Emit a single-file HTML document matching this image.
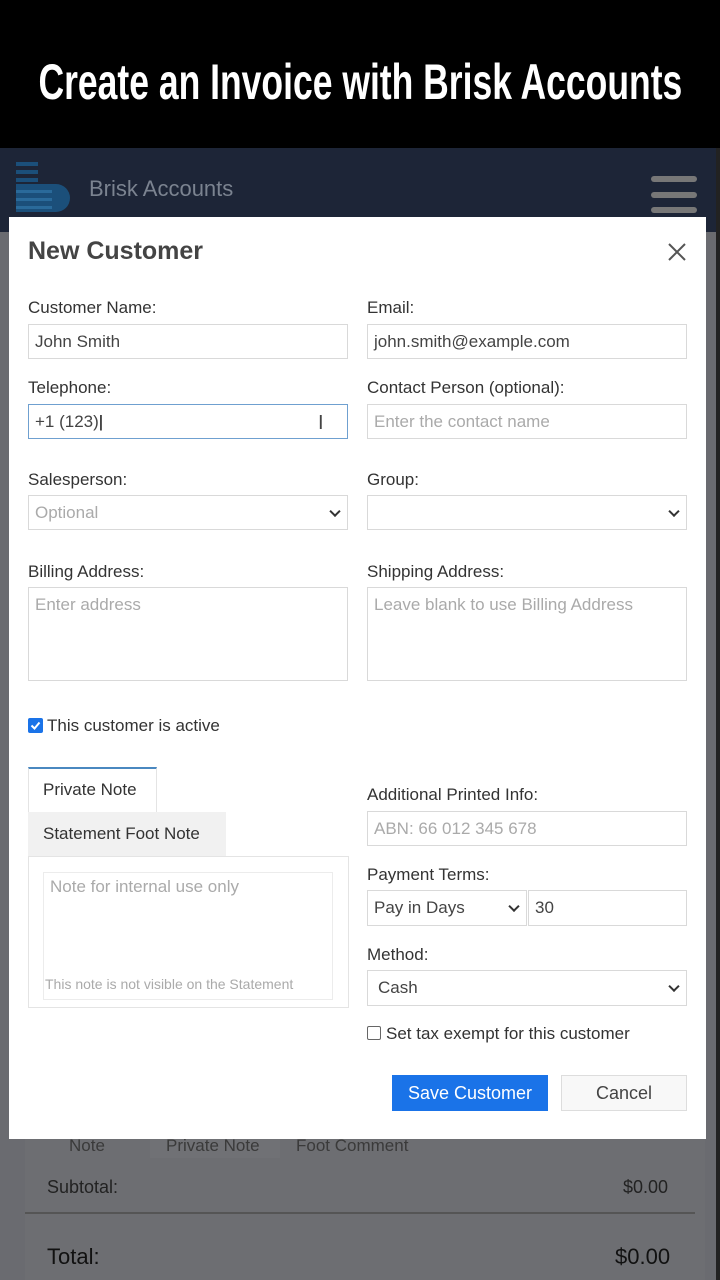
<!DOCTYPE html>
<html><head><meta charset="utf-8"><style>
*{box-sizing:border-box;margin:0;padding:0}
body{width:720px;height:1280px;position:relative;overflow:hidden;background:#000;font-family:"Liberation Sans",sans-serif;color:#333}
.a{position:absolute}
.t{font-size:17px;color:#333;white-space:nowrap}
.in{position:absolute;border:1px solid #d9d9d9;background:#fff;font-size:17px;padding:0 6px;display:flex;align-items:center;color:#444;white-space:nowrap}
.ph{color:#aaa}
.chev{position:absolute;right:8px;top:50%;width:8px;height:8px;border-right:2px solid #333;border-bottom:2px solid #333;transform:translateY(-70%) rotate(45deg)}
</style></head><body>
<div class="a" style="left:0;top:0;width:720px;height:148px;background:#000"></div>
<div class="a" style="left:0;top:52px;width:720px;height:60px;display:flex;justify-content:center;align-items:center"><span style="display:inline-block;white-space:nowrap;color:#fff;font-weight:bold;font-size:50px;transform:scaleX(0.71)">Create an Invoice with Brisk Accounts</span></div>
<div class="a" style="left:0;top:148px;width:716px;height:1132px;background:#6a6b70"></div>
<div class="a" style="left:0;top:148px;width:716px;height:84px;background:#1d2537"></div>
<div class="a" style="left:716px;top:148px;width:4px;height:1132px;background:#222"></div>
<svg class="a" style="left:14px;top:160px" width="60" height="56" viewBox="0 0 60 56"><g fill="#1b4f7a"><rect x="2" y="2" width="22" height="4"/><rect x="2" y="10" width="22" height="4"/><rect x="2" y="18" width="22" height="4"/><path d="M2 24h40a14 14 0 0 1 0 28H2z"/></g><g fill="#2a6a9a"><rect x="2" y="30" width="36" height="3"/><rect x="2" y="38" width="36" height="3"/><rect x="2" y="46" width="36" height="3"/></g></svg>
<div class="a" style="left:89px;top:176px;font-size:22px;color:#7b8390">Brisk Accounts</div>
<div class="a" style="left:651px;top:176px;width:46px;height:6px;background:#777;border-radius:3px"></div>
<div class="a" style="left:651px;top:192px;width:46px;height:6px;background:#777;border-radius:3px"></div>
<div class="a" style="left:651px;top:207px;width:46px;height:6px;background:#777;border-radius:3px"></div>
<div class="a" style="left:25px;top:1139px;width:680px;height:141px;background:#6d6e72"></div>
<div class="a" style="left:69px;top:1136px;font-size:17px;color:#3a3a3a">Note</div>
<div class="a" style="left:150px;top:1136px;width:130px;height:22px;background:#707175"></div>
<div class="a" style="left:166px;top:1136px;font-size:17px;color:#3a3a3a">Private Note</div>
<div class="a" style="left:296px;top:1136px;font-size:17px;color:#3a3a3a">Foot Comment</div>
<div class="a" style="left:47px;top:1177px;font-size:18px;color:#222">Subtotal:</div>
<div class="a" style="left:623px;top:1177px;font-size:18px;color:#222">$0.00</div>
<div class="a" style="left:25px;top:1212px;width:670px;height:2px;background:#555"></div>
<div class="a" style="left:47px;top:1244px;font-size:22px;color:#111">Total:</div>
<div class="a" style="left:615px;top:1244px;font-size:22px;color:#111">$0.00</div>
<div class="a" style="left:9px;top:217px;width:697px;height:922px;background:#fff"></div>
<div class="a" style="left:28px;top:237px;font-size:25px;font-weight:bold;color:#444">New Customer</div>
<svg class="a" style="left:668px;top:243px" width="18" height="18" viewBox="0 0 18 18"><path d="M1 1L17 17M17 1L1 17" stroke="#555" stroke-width="2"/></svg>

<div class="a t" style="left:28px;top:298px">Customer Name:</div>
<div class="in" style="left:28px;top:324px;width:320px;height:35px">John Smith</div>
<div class="a t" style="left:367px;top:298px">Email:</div>
<div class="in" style="left:367px;top:324px;width:320px;height:35px">john.smith@example.com</div>

<div class="a t" style="left:28px;top:378px">Telephone:</div>
<div class="in" style="left:28px;top:404px;width:320px;height:35px;border-color:#6fa0d0">+1 (123)<span style="color:#000">|</span></div>
<div class="a" style="left:318px;top:412px;font-size:20px;color:#444">I</div>
<div class="a t" style="left:367px;top:378px">Contact Person (optional):</div>
<div class="in ph" style="left:367px;top:404px;width:320px;height:35px">Enter the contact name</div>

<div class="a t" style="left:28px;top:470px">Salesperson:</div>
<div class="in ph" style="left:28px;top:495px;width:320px;height:35px">Optional<span class="chev"></span></div>
<div class="a t" style="left:367px;top:470px">Group:</div>
<div class="in" style="left:367px;top:495px;width:320px;height:35px"><span class="chev"></span></div>

<div class="a t" style="left:28px;top:562px">Billing Address:</div>
<div class="in ph" style="left:28px;top:587px;width:320px;height:94px;align-items:flex-start;padding-top:7px">Enter address</div>
<div class="a t" style="left:367px;top:562px">Shipping Address:</div>
<div class="in ph" style="left:367px;top:587px;width:320px;height:94px;align-items:flex-start;padding-top:7px">Leave blank to use Billing Address</div>

<div class="a" style="left:28px;top:718px;width:15px;height:15px;background:#1a73e8;border-radius:2px"></div>
<svg class="a" style="left:28px;top:718px" width="15" height="15" viewBox="0 0 15 15"><path d="M3.5 7.5l3 3 5-6" stroke="#fff" stroke-width="2" fill="none"/></svg>
<div class="a t" style="left:47px;top:716px">This customer is active</div>

<div class="a" style="left:28px;top:767px;width:129px;height:45px;border:1px solid #e4e4e4;border-top:2px solid #4a88c0;border-bottom:none;background:#fff"></div>
<div class="a t" style="left:43px;top:780px">Private Note</div>
<div class="a" style="left:28px;top:812px;width:198px;height:44px;background:#f1f1f1"></div>
<div class="a t" style="left:43px;top:824px">Statement Foot Note</div>
<div class="a" style="left:28px;top:856px;width:321px;height:152px;border:1px solid #e4e4e4"></div>
<div class="a" style="left:43px;top:872px;width:290px;height:128px;border:1px solid #ececec"></div>
<div class="a t ph" style="left:50px;top:877px">Note for internal use only</div>
<div class="a ph" style="left:45px;top:976px;font-size:14px">This note is not visible on the Statement</div>

<div class="a t" style="left:367px;top:785px">Additional Printed Info:</div>
<div class="in ph" style="left:367px;top:811px;width:320px;height:35px">ABN: 66 012 345 678</div>
<div class="a t" style="left:367px;top:865px">Payment Terms:</div>
<div class="in" style="left:367px;top:890px;width:160px;height:36px">Pay in Days<span class="chev"></span></div>
<div class="in" style="left:528px;top:890px;width:159px;height:36px">30</div>
<div class="a t" style="left:367px;top:945px">Method:</div>
<div class="in" style="left:367px;top:970px;width:320px;height:36px;padding-left:10px">Cash<span class="chev"></span></div>
<div class="a" style="left:367px;top:1026px;width:14px;height:14px;border:1px solid #666;border-radius:2px;background:#fff"></div>
<div class="a t" style="left:386px;top:1024px">Set tax exempt for this customer</div>

<div class="a" style="left:392px;top:1075px;width:156px;height:36px;background:#1a73e8;color:#fff;font-size:18px;display:flex;align-items:center;justify-content:center">Save Customer</div>
<div class="a" style="left:561px;top:1075px;width:126px;height:36px;background:#f8f8f8;border:1px solid #ddd;color:#444;font-size:18px;display:flex;align-items:center;justify-content:center">Cancel</div>
</body></html>
